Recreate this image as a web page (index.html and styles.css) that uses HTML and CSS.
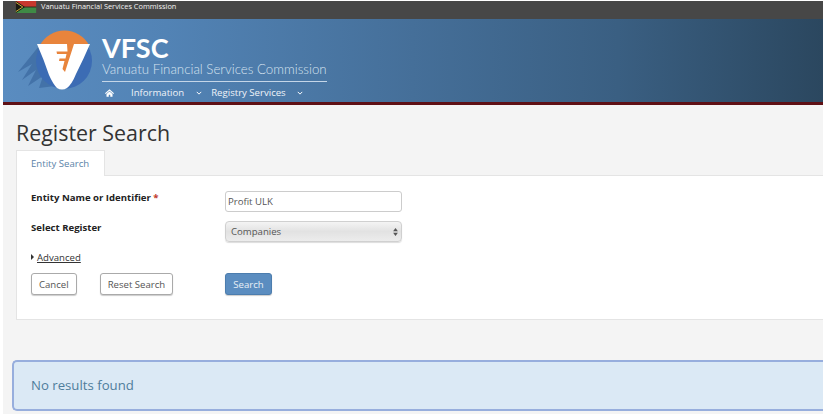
FILE: index.html
```html
<!DOCTYPE html>
<html lang="en">
<head>
<meta charset="utf-8">
<title>Register Search</title>
<link rel="stylesheet" href="styles.css">
</head>
<body>
<div class="page">
  <div class="topbar">
    <svg class="flag" viewBox="0 0 22 13" width="22" height="13" aria-hidden="true">
      <rect width="22" height="6.5" fill="#c8382e"/>
      <rect y="6.5" width="22" height="6.5" fill="#3f8a45"/>
      <path d="M0 0L10 6.5L0 13Z" fill="#1a1a14"/>
      <path d="M0 1.5L7.5 6.5L0 11.5" fill="none" stroke="#d8b93a" stroke-width="1"/>
      <path d="M9 6.5H22" stroke="#2a2a1c" stroke-width="1"/>
    </svg>
    <span class="topbar-text">Vanuatu Financial Services Commission</span>
  </div>
  <header class="masthead">
    <svg class="logo" viewBox="0 0 80 66" width="80" height="66" aria-hidden="true">
      <path d="M24 18L3 44L17 36L7 52L21 42L13 58L28 48L24 60L40 58Z" fill="#4372a8"/>
      <circle cx="49" cy="33" r="28" fill="#3c6cb4"/>
      <path d="M25 17A28 28 0 0 1 74 17Z" fill="#e8843c"/>
      <path d="M22 16H75Q69 30 61 46Q57 56 52 60Q47 63 42 60Q38 56 34 47Q29 32 22 16Z" fill="#fff"/>
      <path d="M52 16H59L50 44L47.500 41L49.500 33H44L44.500 30.500H50.500L51.500 26H42L41.500 23.500H52.500Z" fill="#e8843c"/>
    </svg>
    <div class="brand">
      <div class="brand-name">VFSC</div>
      <div class="brand-sub">Vanuatu Financial Services Commission</div>
      <nav class="nav">
        <svg class="home" viewBox="0 0 12 10" width="9" height="8" aria-hidden="true"><path d="M6 0L12 5.2L11 6.2L6 2L1 6.2L0 5.2ZM2 6.4L6 3L10 6.4V10H7V7.4H5V10H2Z" fill="#fff"/></svg>
        <span class="nav-item info">Information</span>
        <svg class="chev" viewBox="0 0 8 5" width="6" height="4" aria-hidden="true"><path d="M1 1L4 4L7 1" fill="none" stroke="#fff" stroke-width="1.3"/></svg>
        <span class="nav-item">Registry Services</span>
        <svg class="chev last" viewBox="0 0 8 5" width="6" height="4" aria-hidden="true"><path d="M1 1L4 4L7 1" fill="none" stroke="#fff" stroke-width="1.3"/></svg>
      </nav>
    </div>
  </header>
  <main class="content">
    <h1 class="title">Register Search</h1>
    <div class="tabs"><div class="tab">Entity Search</div></div>
    <section class="panel">
      <div class="row row-name">
        <label class="label">Entity Name or Identifier <span class="req">*</span></label>
        <input class="input" type="text" value="Profit ULK">
      </div>
      <div class="row row-select">
        <label class="label">Select Register</label>
        <div class="select"><span>Companies</span>
          <svg viewBox="0 0 6 10" width="5" height="8" aria-hidden="true"><path d="M3 0L6 4H0ZM3 10L0 6H6Z" fill="#555"/></svg>
        </div>
      </div>
      <div class="advanced"><span class="caret"></span><a class="adv-link">Advanced</a></div>
      <div class="row row-buttons">
        <div class="btn-group">
          <button class="btn" type="button">Cancel</button>
          <button class="btn" type="button">Reset Search</button>
        </div>
        <button class="btn primary" type="button">Search</button>
      </div>
    </section>
    <div class="alert">No results found</div>
  </main>
</div>
</body>
</html>
```

FILE: styles.css
```css
* { box-sizing: border-box; }
html, body { margin: 0; height: 100%; background: #fff; overflow: hidden; }
body { font-family: "Open Sans", "Liberation Sans", sans-serif; }
.page { width: 823px; height: 414px; padding: 1px 0 0 3px; overflow: hidden; display: flex; flex-direction: column; }
.topbar { height: 18px; background: #474747; display: flex; align-items: flex-start; padding-left: 12px; flex: none; }
.flag { display: block; height: 12px; }
.topbar-text { color: #f2f2f2; font-size: 7.4px; line-height: 11px; margin-left: 4px; }
.masthead { height: 86px; flex: none; display: flex; background: linear-gradient(90deg, #5a8cc0 0%, #5283b5 20%, #456f99 50%, #3a5f82 75%, #2b475f 100%); border-bottom: 3px solid #5f1015; padding: 9px 0 0 12px; }
.logo { display: block; flex: none; }
.brand { margin-left: 7px; width: 225px; }
.brand-name { color: #fff; font-family: "Lato", "Open Sans", sans-serif; font-size: 27px; font-weight: 700; line-height: 27px; margin-top: 6px; padding-bottom: 1px; }
.brand-sub { color: #d6e2ef; font-family: "Lato", "Open Sans", sans-serif; font-size: 13.3px; line-height: 15px; font-weight: 300; padding-bottom: 4px; border-bottom: 1px solid #c5d6e8; white-space: nowrap; }
.nav { display: flex; align-items: center; color: #fff; height: 17px; margin-top: 2px; padding-left: 3px; }
.home { flex: none; }
.nav-item { font-size: 9.6px; white-space: nowrap; color: #eef3f8; }
.info { margin-left: 17px; }
.chev { margin: 0 9px 0 12px; flex: none; }
.chev.last { margin-left: 11px; }
.content { flex: 1; background: #f4f4f4; padding-left: 13px; display: flex; flex-direction: column; min-height: 0; }
.title { margin: 0; font-size: 21.4px; font-weight: 400; color: #333; line-height: 30px; padding-top: 13px; height: 45px; flex: none; }
.tabs { display: flex; height: 26px; flex: none; border-bottom: 1px solid #e4e4e4; }
.tab { width: 89px; height: 26px; background: #fff; border: 1px solid #e4e4e4; border-bottom: 0; color: #5b83a8; font-size: 9.6px; line-height: 26px; padding-left: 14px; }
.panel { background: #fff; border-bottom: 1px solid #e4e4e4; border-left: 1px solid #e4e4e4; height: 144px; flex: none; padding: 15px 0 0 14px; }
.row { display: flex; align-items: flex-start; }
.label { width: 194px; flex: none; font-size: 9.6px; font-weight: 700; color: #222; line-height: 14px; }
.req { color: #c0392b; }
.input { width: 177px; height: 21px; border: 1px solid #ccc; border-radius: 3px; padding: 0 2px; font: 9.6px "Open Sans", sans-serif; color: #555; background: #fff; }
.row-select { margin-top: 9px; }
.select { width: 177px; height: 21px; border-radius: 4px; border: 1px solid #d0d0d0; background: linear-gradient(#f4f4f4, #e2e2e2 50%, #ececec); display: flex; align-items: center; justify-content: space-between; padding: 0 3px 0 5px; font-size: 9.6px; color: #555; box-shadow: 0 1px 1px #ddd; }
.advanced { display: flex; align-items: center; margin-top: 8px; height: 14px; font-size: 9.6px; color: #333; }
.caret { width: 0; height: 0; border-left: 3px solid #333; border-top: 3px solid transparent; border-bottom: 3px solid transparent; margin-right: 3px; }
.adv-link { text-decoration: underline; }
.row-buttons { margin-top: 9px; }
.btn-group { width: 194px; flex: none; display: flex; gap: 23px; }
.btn { height: 22px; border: 1px solid #aaa; border-radius: 3px; background: #fff; font: 9.6px "Open Sans", sans-serif; color: #555; padding: 0 7px; box-shadow: 0 1px 1px #ccc; }
.btn.primary { width: 47px; padding: 0; background: #5b8dc0; border-color: #4c7dae; color: #e8eff6; }
.alert { margin: 40px 0 0 -4px; height: 51px; background: #dbe9f5; border: 2px solid #97aedd; border-right: 0; border-radius: 5px 0 0 5px; color: #4f7d9c; font-size: 13.2px; line-height: 47px; padding-left: 17px; flex: none; }
```
